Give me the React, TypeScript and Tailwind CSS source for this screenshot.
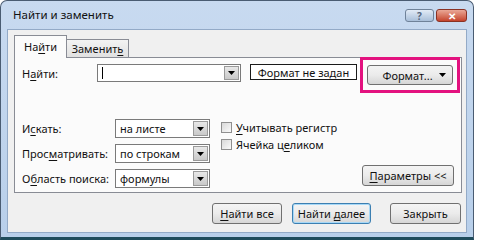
import { FC, ReactNode } from "react"

const U: FC<{ children: ReactNode }> = ({ children }) => (
  <span className="underline decoration-1 underline-offset-[2px]">{children}</span>
)

const Arrow: FC = () => (
  <svg width="7" height="4" viewBox="0 0 7 4">
    <path d="M0 0h7L3.5 4z" fill="#000" />
  </svg>
)

const Combo: FC<{ className: string; children?: ReactNode }> = ({ className, children }) => (
  <div className={`flex shrink-0 items-stretch border border-[#7a7a7a] bg-white ${className}`}>
    <div className="flex flex-1 items-center whitespace-nowrap pl-[4px] leading-none">{children}</div>
    <div className="m-[1px] flex w-[15px] items-center justify-center border border-[#9a9a9a] bg-gradient-to-b from-[#e8e8e8] to-[#c9c9c9]">
      <Arrow />
    </div>
  </div>
)

const Btn: FC<{ className: string; children: ReactNode }> = ({ className, children }) => (
  <div
    className={`flex shrink-0 items-center justify-center whitespace-nowrap rounded-[3px] border bg-gradient-to-b from-[#f4f4f4] via-[#ebebeb] to-[#d6d6d6] leading-none ${className}`}
  >
    {children}
  </div>
)

const Check: FC<{ children: ReactNode }> = ({ children }) => (
  <div className="flex h-[13px] items-center">
    <div className="h-[11px] w-[11px] border border-[#8f8f8f] bg-gradient-to-br from-[#d8d8d8] to-[#fafafa]" />
    <span className="ml-[4px] whitespace-nowrap leading-none">{children}</span>
  </div>
)

const App: FC = () => {
  return (
    <div className="h-[240px] w-[477px] overflow-hidden bg-white font-['Noto_Sans',sans-serif] text-[11px] text-[#111]">
      <div className="flex h-[240px] w-[474px] flex-col rounded-t-[7px] border border-[#4a5c72] border-b-[3px] border-b-[#1f4c5c] bg-gradient-to-b from-[#c8daf0] to-[#b8cfea]">
        <div className="flex h-[28px] items-start justify-between pl-[12px] pr-[6px]">
          <span className="mt-[8px] text-[11.5px] leading-none">Найти и заменить</span>
          <div className="mt-[8px] flex gap-[2px]">
            <div className="flex h-[13px] w-[29px] items-center justify-center rounded-[3px] border border-[#6f8299] bg-gradient-to-b from-[#e2ebf6] to-[#a9bfd9] text-[10px] font-bold leading-none text-[#56677e]">
              ?
            </div>
            <div className="flex h-[13px] w-[31px] items-center justify-center rounded-[3px] border border-[#8a3224] bg-gradient-to-b from-[#e9a796] to-[#c4422c] text-[10px] font-bold leading-none text-white">
              ✕
            </div>
          </div>
        </div>

        <div className="mx-[6px] mb-[4px] flex flex-1 flex-col border border-[#93aac7] bg-[#f0f0f0]">
          <div className="ml-[6px] mt-[5px] flex items-end">
            <div className="relative z-10 -mb-[1px] flex h-[23px] w-[53px] items-center justify-center border border-b-0 border-[#898c95] bg-[#fbfbfb] pb-[1px] leading-none">
              <span>
                На<U>й</U>ти
              </span>
            </div>
            <div className="flex h-[18px] w-[62px] items-center justify-center border border-l-0 border-b-0 border-[#898c95] bg-gradient-to-b from-[#f3f3f3] to-[#e1e1e1] leading-none">
              <span>
                Заменит<U>ь</U>
              </span>
            </div>
          </div>

          <div className="relative ml-[6px] mr-[4px] flex h-[136px] flex-col border border-[#898c95] bg-[#fbfbfb] pl-[7px] pt-[6px]">
            <div className="flex items-start">
              <div className="flex h-[18px] w-[75px] shrink-0 items-center whitespace-nowrap leading-none">
                <span>
                  Н<U>а</U>йти:
                </span>
              </div>
              <Combo className="h-[18px] w-[144px]">
                <div className="h-[12px] w-[1px] bg-black" />
              </Combo>
              <div className="ml-[9px] flex h-[16px] w-[107px] shrink-0 items-center justify-center whitespace-nowrap border border-[#1a1a1a] bg-white leading-none">
                Формат не задан
              </div>
              <Btn className="ml-[10px] mt-[1px] h-[20px] w-[86px] border-[#707070]">
                <span className="ml-[8px] flex-1 text-center">Формат...</span>
                <span className="mr-[6px] flex">
                  <Arrow />
                </span>
              </Btn>
            </div>

            <div className="mt-[34px] flex flex-1">
              <div className="flex flex-col gap-[6px]">
                <div className="flex items-center">
                  <span className="w-[93px] shrink-0 whitespace-nowrap leading-none">
                    И<U>с</U>кать:
                  </span>
                  <Combo className="h-[19px] w-[95px]">на листе</Combo>
                </div>
                <div className="flex items-center">
                  <span className="w-[93px] shrink-0 whitespace-nowrap leading-none">
                    Прос<U>м</U>атривать:
                  </span>
                  <Combo className="h-[19px] w-[95px]">по строкам</Combo>
                </div>
                <div className="flex items-center">
                  <span className="w-[93px] shrink-0 whitespace-nowrap leading-none">
                    О<U>б</U>ласть поиска:
                  </span>
                  <Combo className="h-[19px] w-[95px]">формулы</Combo>
                </div>
              </div>

              <div className="ml-[11px] mt-[2px] flex flex-col gap-[4px]">
                <Check>
                  <U>У</U>читывать регистр
                </Check>
                <Check>
                  Ячейка ц<U>е</U>ликом
                </Check>
              </div>

              <Btn className="mb-[6px] ml-auto mr-[7px] h-[21px] w-[92px] self-end border-[#707070]">
                <span>
                  <U>П</U>араметры &lt;&lt;
                </span>
              </Btn>
            </div>

            {/* highlight around the Format button */}
            <div className="absolute left-[345px] top-[-1px] h-[36px] w-[100px] border-[3px] border-[#e3127f]" />
          </div>

          <div className="mr-[5px] mt-[10px] flex justify-end">
            <Btn className="h-[21px] w-[70px] border-[#707070]">
              <span>
                <U>Н</U>айти все
              </span>
            </Btn>
            <Btn className="ml-[10px] h-[21px] w-[79px] border-[#3c7fb1] shadow-[inset_0_0_0_1px_#a6d8f7]">
              <span>
                Найти <U>д</U>алее
              </span>
            </Btn>
            <Btn className="ml-[19px] h-[21px] w-[71px] border-[#707070]">Закрыть</Btn>
          </div>
        </div>
      </div>
    </div>
  )
}

export default App
